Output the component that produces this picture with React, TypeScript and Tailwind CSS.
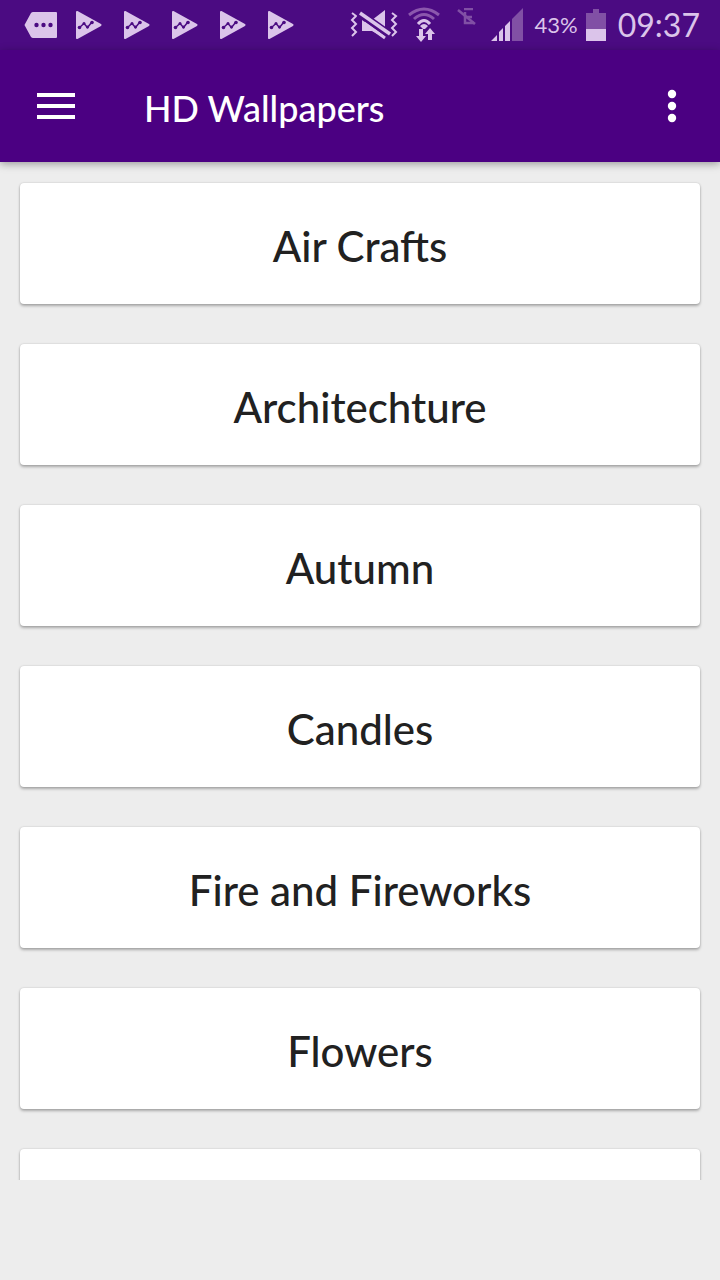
const categories = [
  'Air Crafts',
  'Architechture',
  'Autumn',
  'Candles',
  'Fire and Fireworks',
  'Flowers',
];

const cardClass =
  'flex h-[121px] w-full shrink-0 items-center justify-center rounded bg-white pt-1 text-[42px] leading-none font-medium text-[#212121] shadow-[0_2px_3px_rgba(0,0,0,0.28),0_0_2px_rgba(0,0,0,0.18)]';

function MessageIcon() {
  return (
    <svg width="34" height="28" viewBox="0 0 34 28" aria-hidden="true">
      <path d="M9 1h23q1 0 1 1v24q0 1-1 1H9q-1 0-2-1L1 15q-1-1 0-2L7 2q1-1 2-1z" fill="#dbc4ea" />
      <g fill="#4b0b82">
        <circle cx="12.500" cy="14" r="2.200" />
        <circle cx="19.500" cy="14" r="2.200" />
        <circle cx="26.500" cy="14" r="2.200" />
      </g>
    </svg>
  );
}

function PlayConsoleIcon() {
  return (
    <svg width="28" height="30" viewBox="0 0 28 30" aria-hidden="true">
      <path
        d="M2 2l23.500 13L2 28z"
        fill="#dbc4ea"
        stroke="#dbc4ea"
        strokeWidth="2"
        strokeLinejoin="round"
      />
      <path d="M4.500 17.500l4.500-4 3.500 4 4-5" fill="none" stroke="#4b0b82" strokeWidth="1.500" />
      <g fill="#4b0b82">
        <circle cx="4.500" cy="17.500" r="1.800" />
        <circle cx="9" cy="13.500" r="1.500" />
        <circle cx="12.500" cy="17" r="1.500" />
        <circle cx="17" cy="12.500" r="1.800" />
      </g>
    </svg>
  );
}

function VibrateMuteIcon() {
  return (
    <svg width="48" height="32" viewBox="0 0 48 32" aria-hidden="true">
      <g fill="none" stroke="#dbc4ea" strokeWidth="2">
        <path d="M2 4l4 3-4 4 4 4-4 4 4 4-4 4" />
        <path d="M42 4l4 3-4 4 4 4-4 4 4 4-4 4" />
      </g>
      <path d="M12 11h10L35 1v28L22 22H12z" fill="#dbc4ea" />
      <path d="M9 4l31 22" stroke="#4b0b82" strokeWidth="8" />
      <path d="M10 4l30 21" stroke="#dbc4ea" strokeWidth="3.500" />
      <path d="M14 14l21 15" stroke="#dbc4ea" strokeWidth="3" />
    </svg>
  );
}

function WifiIcon() {
  return (
    <svg width="33" height="36" viewBox="0 0 33 36" aria-hidden="true">
      <g fill="none" strokeWidth="3">
        <path d="M1 8q15-12 30 0" stroke="#8b57ad" />
        <path d="M6 12q10-9 20 0" stroke="#8b57ad" />
        <path d="M10 17q6-7 12 0" stroke="#dbc4ea" />
      </g>
      <path d="M12 19q4-4 8 0l-3 3h-2z" fill="#dbc4ea" />
      <path d="M11 22h4v7h3l-5 6-5-6h3zM20 33v-6h-3l5-6 5 6h-3v6z" fill="#dbc4ea" />
    </svg>
  );
}

function NoSimIcon() {
  return (
    <svg width="20" height="18" viewBox="0 0 20 18" aria-hidden="true">
      <path d="M7 1h9M8 4v11h9M9 9h6" fill="none" stroke="#8150a5" strokeWidth="2.500" />
      <path d="M1 2l17 14" stroke="#8150a5" strokeWidth="2.500" />
    </svg>
  );
}

function SignalIcon() {
  return (
    <svg width="32" height="34" viewBox="0 0 32 34" aria-hidden="true">
      <path d="M0 33l6-6v6zM8 33v-9l4-4v13zM14 33V18l5-5v20z" fill="#dbc4ea" />
      <path d="M21 33V11L32 0v33z" fill="#8150a5" />
    </svg>
  );
}

function BatteryIcon() {
  return (
    <svg width="20" height="32" viewBox="0 0 20 32" aria-hidden="true">
      <path d="M7 0h6v4h7v16H0V4h7z" fill="#8150a5" />
      <path d="M0 20h20v12H0z" fill="#dbc4ea" />
    </svg>
  );
}

function StatusBar() {
  return (
    <div className="flex h-[50px] shrink-0 items-center justify-between bg-[#4b0b82] pr-5 pl-6 text-[#dbc4ea]">
      <div className="flex items-center">
        <MessageIcon />
        <div className="ml-[17px] flex gap-5">
          <PlayConsoleIcon />
          <PlayConsoleIcon />
          <PlayConsoleIcon />
          <PlayConsoleIcon />
          <PlayConsoleIcon />
        </div>
      </div>
      <div className="flex items-center">
        <VibrateMuteIcon />
        <span className="ml-2.5"><WifiIcon /></span>
        <span className="mb-4 ml-4"><NoSimIcon /></span>
        <span className="ml-3.5"><SignalIcon /></span>
        <span className="ml-3 text-[22px] leading-none">43%</span>
        <span className="ml-2"><BatteryIcon /></span>
        <span className="ml-3 text-[32px] leading-none">09:37</span>
      </div>
    </div>
  );
}

export default function App() {
  return (
    <div className="flex h-screen flex-col bg-[#ededed] font-['Lato','Open_Sans',sans-serif]">
      <StatusBar />

      <header className="z-10 flex h-28 shrink-0 items-center bg-[#4b0082] pr-4 pl-8 text-white shadow-[0_2px_8px_rgba(0,0,0,0.35)]">
        <button type="button" aria-label="Open menu" className="flex h-12 w-12 items-center justify-center">
          <svg width="38" height="26" viewBox="0 0 38 26" fill="currentColor" aria-hidden="true">
            <path d="M0 0h38v4H0zM0 11h38v4H0zM0 22h38v4H0z" />
          </svg>
        </button>
        <h1 className="ml-16 flex-1 pt-1 text-[36px] leading-none font-medium">HD Wallpapers</h1>
        <button type="button" aria-label="More options" className="flex h-12 w-16 items-center justify-center">
          <svg width="10" height="34" viewBox="0 0 10 34" fill="currentColor" aria-hidden="true">
            <circle cx="5" cy="5" r="4.200" />
            <circle cx="5" cy="17" r="4.200" />
            <circle cx="5" cy="29" r="4.200" />
          </svg>
        </button>
      </header>

      <main className="flex min-h-0 flex-1 flex-col gap-10 overflow-hidden px-5 pt-[21px]">
        {categories.map((name) => (
          <button key={name} type="button" className={cardClass}>
            {name}
          </button>
        ))}
        <div className={cardClass} />
      </main>

      <footer className="h-[100px] shrink-0" />
    </div>
  );
}
